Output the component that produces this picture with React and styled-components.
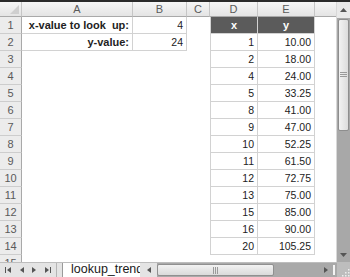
import React from 'react';
import styled, { createGlobalStyle } from 'styled-components';

const GlobalStyle = createGlobalStyle`
  html, body { margin: 0; padding: 0; background: #fff; }
  #root { width: 350px; height: 277px; overflow: hidden; }
`;

const font = `"Liberation Sans", Arial, sans-serif`;

const Frame = styled.div`
  width: 350px;
  height: 277px;
  display: flex;
  flex-direction: column;
  border-top: 2px solid #2a2a2a;
  box-sizing: border-box;
  font-family: ${font};
  overflow: hidden;
`;

const Main = styled.div`
  flex: 0 0 260px;
  display: flex;
  overflow: hidden;
`;

const Sheet = styled.div`
  flex: 1;
  display: grid;
  grid-template-columns: 22px 111px 54px 23px 48px 57px 22px;
  grid-template-rows: 15px;
  grid-auto-rows: 17px;
  overflow: hidden;
  align-content: start;
`;

const ColHead = styled.div`
  box-sizing: border-box;
  background: linear-gradient(#f6f6f6, #e4e4e4);
  border-right: 1px solid #c6c6c6;
  border-bottom: 1px solid #a9a9a9;
  color: #5a5a5a;
  font-size: 11px;
  line-height: 14px;
  text-align: center;
`;

const Corner = styled(ColHead)`
  position: relative;
  &::after {
    content: '';
    position: absolute;
    right: 2px;
    bottom: 2px;
    border-style: solid;
    border-width: 0 0 9px 9px;
    border-color: transparent transparent #cfcfcf transparent;
  }
`;

const RowHead = styled.div`
  box-sizing: border-box;
  background: #ececec;
  border-right: 1px solid #a9a9a9;
  border-bottom: 1px solid #cdcdcd;
  color: #5a5a5a;
  font-size: 11px;
  line-height: 16px;
  text-align: center;
`;

const Cell = styled.div`
  box-sizing: border-box;
  padding: 0 3px;
  font-size: ${(p) => (p.$bold ? '11px' : '10.5px')};
  font-weight: ${(p) => (p.$bold ? 700 : 400)};
  line-height: 16px;
  white-space: pre;
  color: ${(p) => (p.$dark ? '#fff' : '#222')};
  background: ${(p) => (p.$dark ? '#5b5b5b' : '#fff')};
  text-align: ${(p) => p.$align || 'right'};
  border-right: ${(p) => (p.$box ? '1px solid #d2d2d2' : 'none')};
  border-bottom: ${(p) => (p.$box ? '1px solid #d2d2d2' : 'none')};
  border-left: ${(p) => (p.$left ? '1px solid #d2d2d2' : 'none')};
`;

const VScroll = styled.div`
  flex: 0 0 13px;
  display: flex;
  flex-direction: column;
  background: #a8a8a8;
  border-left: 1px solid #d8d8d8;
`;

const ArrowBtn = styled.div`
  flex: 0 0 ${(p) => p.$size || 15}px;
  display: flex;
  align-items: center;
  justify-content: center;
  background: ${(p) => p.$bg || '#e9e9e9'};
`;

const VThumb = styled.div`
  flex: 0 0 112px;
  margin: 1px 1px 0;
  box-sizing: border-box;
  border: 1px solid #8e8e8e;
  border-radius: 2px;
  background: linear-gradient(90deg, #f2f2f2, #dcdcdc);
  display: flex;
  align-items: center;
  justify-content: center;
`;

const VTrack = styled.div`
  flex: 1;
`;

const BottomBar = styled.div`
  flex: 0 0 15px;
  display: flex;
  align-items: stretch;
  background: #e4e4e4;
  border-top: 1px solid #bdbdbd;
  box-sizing: border-box;
`;

const NavGroup = styled.div`
  flex: 0 0 57px;
  display: flex;
  align-items: center;
  justify-content: space-around;
  padding: 0 2px;
  box-sizing: border-box;
  border-right: 1px solid #b5b5b5;
`;

const TabGap = styled.div`
  flex: 0 0 5px;
`;

const Tab = styled.div`
  flex: 0 0 78px;
  background: #fff;
  border-left: 1px solid #9a9a9a;
  font-size: 12.5px;
  line-height: 13px;
  color: #1a1a1a;
  padding-left: 8px;
  box-sizing: border-box;
  white-space: nowrap;
  overflow: hidden;
`;

const HScroll = styled.div`
  flex: 1;
  display: flex;
  background: #a9a9a9;
`;

const HThumb = styled.div`
  flex: 0 0 117px;
  box-sizing: border-box;
  border: 1px solid #909090;
  border-radius: 2px;
  margin: 1px 0;
  background: linear-gradient(#f2f2f2, #dadada);
  display: flex;
  align-items: center;
  justify-content: center;
`;

const HTrack = styled.div`
  flex: 1;
`;

const Divider = styled.div`
  flex: 0 0 7px;
  display: flex;
  justify-content: center;
  align-items: center;
  &::before {
    content: '';
    width: 2px;
    height: 10px;
    background: #f4f4f4;
  }
`;

const Grip = styled.div`
  flex: 0 0 13px;
  background: #bdbdbd;
  display: flex;
  align-items: flex-end;
  justify-content: flex-end;
`;

const Tri = ({ dir, bar }) => {
  const pts = {
    left: '5,0 5,6 1,3',
    right: '1,0 1,6 5,3',
    up: '0,5 7,5 3.5,1',
    down: '0,1 7,1 3.5,5',
  }[dir];
  const w = dir === 'up' || dir === 'down' ? 7 : bar ? 7 : 6;
  return (
    <svg width={w} height="6" viewBox={`0 0 ${w} 6`}>
      {bar === 'left' && <rect x="0" y="0" width="1" height="6" fill="#555" />}
      <polygon
        points={bar === 'left' ? '6,0 6,6 2,3' : pts}
        fill="#555"
      />
      {bar === 'right' && <rect x="6" y="0" width="1" height="6" fill="#555" />}
    </svg>
  );
};

const GripLines = ({ vertical }) => (
  <svg width={vertical ? 7 : 6} height={vertical ? 6 : 7}>
    {[0, 2, 4].map((o) =>
      vertical ? (
        <rect key={o} x="0" y={o} width="7" height="1" fill="#9a9a9a" />
      ) : (
        <rect key={o} x={o} y="0" width="1" height="7" fill="#9a9a9a" />
      )
    )}
  </svg>
);

const ResizeDots = () => (
  <svg width="10" height="10">
    {[
      [8, 2], [8, 5], [5, 5], [8, 8], [5, 8], [2, 8],
    ].map(([x, y]) => (
      <rect key={`${x}-${y}`} x={x} y={y} width="1.5" height="1.5" fill="#eee" />
    ))}
  </svg>
);

const cols = ['A', 'B', 'C', 'D', 'E', ''];

const lookup = [
  [1, '10.00'], [2, '18.00'], [4, '24.00'], [5, '33.25'], [8, '41.00'],
  [9, '47.00'], [10, '52.25'], [11, '61.50'], [12, '72.75'], [13, '75.00'],
  [15, '85.00'], [16, '90.00'], [20, '105.25'],
];

function leftCells(row) {
  if (row === 1) {
    return [
      <Cell key="a" $bold $box>{'x-value to look  up:'}</Cell>,
      <Cell key="b" $box>4</Cell>,
    ];
  }
  if (row === 2) {
    return [
      <Cell key="a" $bold $box>y-value:</Cell>,
      <Cell key="b" $box>24</Cell>,
    ];
  }
  return [<Cell key="a" />, <Cell key="b" />];
}

function tableCells(row) {
  if (row === 1) {
    return [
      <Cell key="d" $dark $bold $box $left $align="center">x</Cell>,
      <Cell key="e" $dark $bold $box $align="center">y</Cell>,
    ];
  }
  const item = lookup[row - 2];
  if (!item) return [<Cell key="d" />, <Cell key="e" />];
  return [
    <Cell key="d" $box $left>{item[0]}</Cell>,
    <Cell key="e" $box>{item[1]}</Cell>,
  ];
}

export default function App() {
  const rows = Array.from({ length: 15 }, (_, i) => i + 1);
  return (
    <>
      <GlobalStyle />
      <Frame>
        <Main>
          <Sheet>
            <Corner />
            {cols.map((c, i) => (
              <ColHead key={i}>{c}</ColHead>
            ))}
            {rows.map((r) => (
              <React.Fragment key={r}>
                <RowHead>{r}</RowHead>
                {leftCells(r)}
                <Cell />
                {tableCells(r)}
                <Cell />
              </React.Fragment>
            ))}
          </Sheet>
          <VScroll>
            <ArrowBtn $size={16}><Tri dir="up" /></ArrowBtn>
            <VThumb><GripLines vertical /></VThumb>
            <VTrack />
            <ArrowBtn $size={15} $bg="#a8a8a8"><Tri dir="down" /></ArrowBtn>
          </VScroll>
        </Main>
        <BottomBar>
          <NavGroup>
            <Tri dir="left" bar="left" />
            <Tri dir="left" />
            <Tri dir="right" />
            <Tri dir="right" bar="right" />
          </NavGroup>
          <TabGap />
          <Tab>lookup_trend</Tab>
          <HScroll>
            <ArrowBtn $size={17} $bg="#e4e4e4"><Tri dir="left" /></ArrowBtn>
            <HThumb><GripLines /></HThumb>
            <HTrack />
            <ArrowBtn $size={9} $bg="#a9a9a9"><Tri dir="right" /></ArrowBtn>
            <Divider />
            <Grip><ResizeDots /></Grip>
          </HScroll>
        </BottomBar>
      </Frame>
    </>
  );
}
